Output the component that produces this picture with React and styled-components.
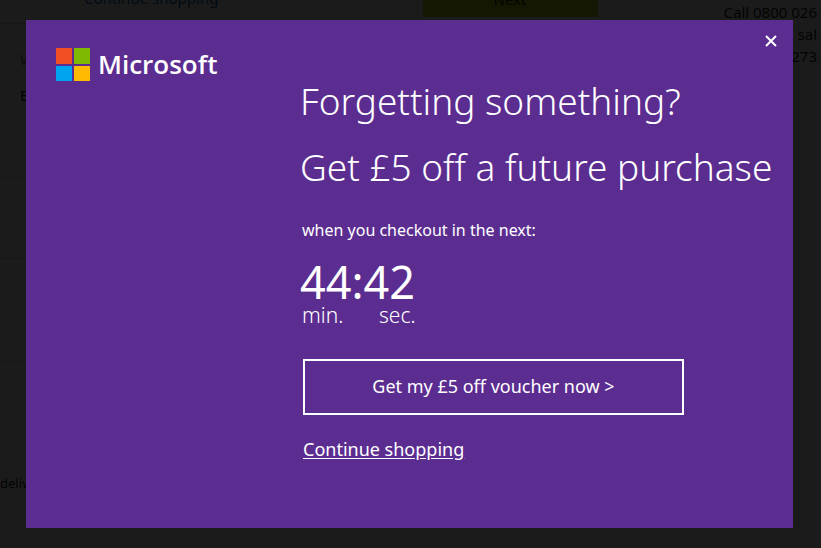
import { useState } from 'react';
import styled, { createGlobalStyle } from 'styled-components';

const rows = [
    { height: 154, lines: ['W', 'E'] },
    { height: 81, lines: [] },
    { height: 103, lines: [] },
];

const App = () => {

    const [open, setOpen] = useState(true)

    function close(event){
        event.preventDefault()
        setOpen(false)
    }

    return(
        <>
        <GlobalStyle />
        <Page>
            <Basket>
                <Toolbar>
                    <ContinueLink href="#shop">Continue shopping</ContinueLink>
                    <NextButton type="button">Next</NextButton>
                </Toolbar>
                {rows.map((row, i) => (
                    <Row key={i} $height={row.height}>
                        {row.lines.map((line) => <p key={line}>{line}</p>)}
                    </Row>
                ))}
                <Delivery>deliv</Delivery>
            </Basket>
            <Help>
                <p>Call 0800 026</p>
                <p>n sal</p>
                <p>273</p>
            </Help>
        </Page>

        {open ? (
            <Overlay>
                <Dialog role="dialog" aria-modal="true" aria-labelledby="offerTitle">
                    <Brand>
                        <Logo viewBox="0 0 34 33" aria-hidden="true">
                            <path fill="#f25022" d="M0 0h16v16H0z" />
                            <path fill="#7fba00" d="M18 0h16v16H18z" />
                            <path fill="#00a4ef" d="M0 18h16v15H0z" />
                            <path fill="#ffb900" d="M18 18h16v15H18z" />
                        </Logo>
                        <span>Microsoft</span>
                    </Brand>
                    <Offer>
                        <Title id="offerTitle">
                            <span>Forgetting something?</span>
                            <span>Get £5 off a future purchase</span>
                        </Title>
                        <Lead>when you checkout in the next:</Lead>
                        <Timer role="timer">
                            <strong>44:42</strong>
                            <Unit>min.</Unit>
                            <Unit>sec.</Unit>
                        </Timer>
                        <Actions>
                            <VoucherButton type="button">Get my £5 off voucher now &gt;</VoucherButton>
                            <SkipLink href="#shop" onClick={close}>Continue shopping</SkipLink>
                        </Actions>
                    </Offer>
                    <CloseButton type="button" aria-label="Close" onClick={close}>
                        <svg viewBox="0 0 12 12" aria-hidden="true">
                            <path d="M1 1l10 10M11 1L1 11" stroke="#fff" strokeWidth="2" fill="none" />
                        </svg>
                    </CloseButton>
                </Dialog>
            </Overlay>
        ) : '' }
        </>
    )
}

const GlobalStyle = createGlobalStyle`
    * {
        box-sizing: border-box;
    }

    body {
        margin: 0;
        background: #fff;
        overflow: hidden;
        font-family: "Noto Sans", "Open Sans", sans-serif;
    }

    p, h1 {
        margin: 0;
        font-weight: 400;
    }
`;

const Page = styled.div`
    display: flex;
    gap: 48px;
    margin-top: -24px;
    font-size: 15px;
    line-height: 22px;
    color: #222;
`;

const Basket = styled.main`
    flex: 1;
`;

const Toolbar = styled.div`
    display: flex;
    justify-content: space-between;
    align-items: flex-end;
    height: 48px;
    padding: 0 78px 6px 84px;
    border-bottom: 1px solid #ccc;
`;

const ContinueLink = styled.a`
    margin-bottom: 8px;
    color: #0072c6;
    text-decoration: none;
`;

const NextButton = styled.button`
    width: 175px;
    height: 36px;
    padding: 0;
    border: 0;
    background: #bad80a;
    color: #222;
    font: inherit;
`;

const Row = styled.section`
    display: flex;
    flex-direction: column;
    gap: 14px;
    height: ${({ $height }) => $height}px;
    padding: 24px 20px;
    border-bottom: 1px solid #ccc;

    p:first-child {
        color: #777;
    }
`;

const Delivery = styled.p`
    margin-top: 110px;
    font-size: 13px;
`;

const Help = styled.aside`
    padding: 25px 4px 0 0;
    text-align: right;
`;

const Overlay = styled.div`
    position: fixed;
    inset: 0;
    display: flex;
    padding: 20px 28px 20px 26px;
    background: rgba(0, 0, 0, 0.894);
`;

const Dialog = styled.section`
    position: relative;
    flex: 1;
    display: grid;
    grid-template-columns: 244px minmax(0, 1fr);
    align-items: start;
    padding: 28px 28px 28px 30px;
    background: #5c2d91;
    color: #fff;
`;

const Brand = styled.div`
    display: flex;
    align-items: center;
    gap: 8px;
    font: 600 26px/33px "Open Sans", sans-serif;
`;

const Logo = styled.svg`
    width: 34px;
    height: 33px;
`;

const Offer = styled.div`
    padding-top: 20px;
`;

const Title = styled.h1`
    font-size: 37px;
    font-weight: 300;
    line-height: 66px;

    span {
        display: block;
        white-space: nowrap;
    }
`;

const Lead = styled.p`
    margin-top: 18px;
    padding-left: 2px;
    font-size: 16px;
    line-height: 24px;
`;

const Timer = styled.div`
    display: grid;
    grid-template-columns: 77px 1fr;
    margin-top: 16px;

    strong {
        grid-column: 1 / -1;
        font-size: 45px;
        font-weight: 400;
        line-height: 48px;
    }
`;

const Unit = styled.span`
    padding-left: 2px;
    font-size: 21px;
    font-weight: 300;
    line-height: 18px;
`;

const Actions = styled.div`
    display: flex;
    flex-direction: column;
    align-items: flex-start;
    gap: 22px;
    margin-top: 35px;
    padding-left: 3px;
`;

const VoucherButton = styled.button`
    width: 100%;
    max-width: 381px;
    height: 56px;
    padding: 0 0 2px;
    border: 2px solid #fff;
    background: transparent;
    color: #fff;
    font: inherit;
    font-size: 18px;
    cursor: pointer;
`;

const SkipLink = styled.a`
    font-size: 18px;
    line-height: 24px;
    color: #fff;
    text-underline-offset: 2px;
`;

const CloseButton = styled.button`
    position: absolute;
    top: 10px;
    right: 11px;
    display: flex;
    align-items: center;
    justify-content: center;
    width: 22px;
    height: 22px;
    padding: 0;
    border: 0;
    background: transparent;
    cursor: pointer;

    svg {
        width: 12px;
        height: 12px;
    }
`;

export default App;
